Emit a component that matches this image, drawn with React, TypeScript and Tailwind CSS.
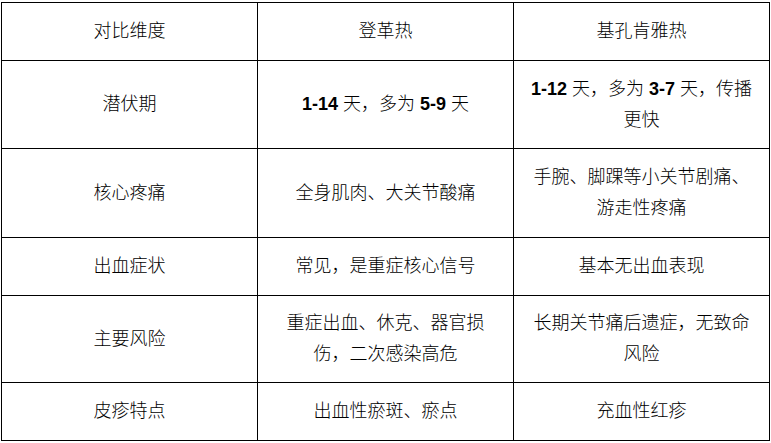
import React from "react";

const B = ({ children }: { children: React.ReactNode }) => (
  <span className="font-bold">{children}</span>
);

const rows: React.ReactNode[][] = [
  ["对比维度", "登革热", "基孔肯雅热"],
  [
    "潜伏期",
    <>
      <B>1-14</B> 天，多为 <B>5-9</B> 天
    </>,
    <>
      <B>1-12</B> 天，多为 <B>3-7</B> 天，传播更快
    </>,
  ],
  ["核心疼痛", "全身肌肉、大关节酸痛", "手腕、脚踝等小关节剧痛、游走性疼痛"],
  ["出血症状", "常见，是重症核心信号", "基本无出血表现"],
  ["主要风险", "重症出血、休克、器官损伤，二次感染高危", "长期关节痛后遗症，无致命风险"],
  ["皮疹特点", "出血性瘀斑、瘀点", "充血性红疹"],
];

export default function App() {
  return (
    <div className="w-[771px] h-[443px] bg-white pt-[2px] pl-[1px]">
      <div
        className="grid w-[769px] grid-cols-[256px_256px_256px] grid-rows-[58px_88px_89px_58px_87px_58px] border-l border-t border-black text-[18px] font-light leading-[31px] text-black"
        style={{ fontFamily: '"Liberation Sans", "Noto Sans CJK SC", sans-serif' }}
      >
        {rows.map((r, i) =>
          r.map((c, j) => (
            <div
              key={`${i}-${j}`}
              className="flex items-center justify-center border-r border-b border-black px-[15px] text-center"
            >
              <div>{c}</div>
            </div>
          ))
        )}
      </div>
    </div>
  );
}
